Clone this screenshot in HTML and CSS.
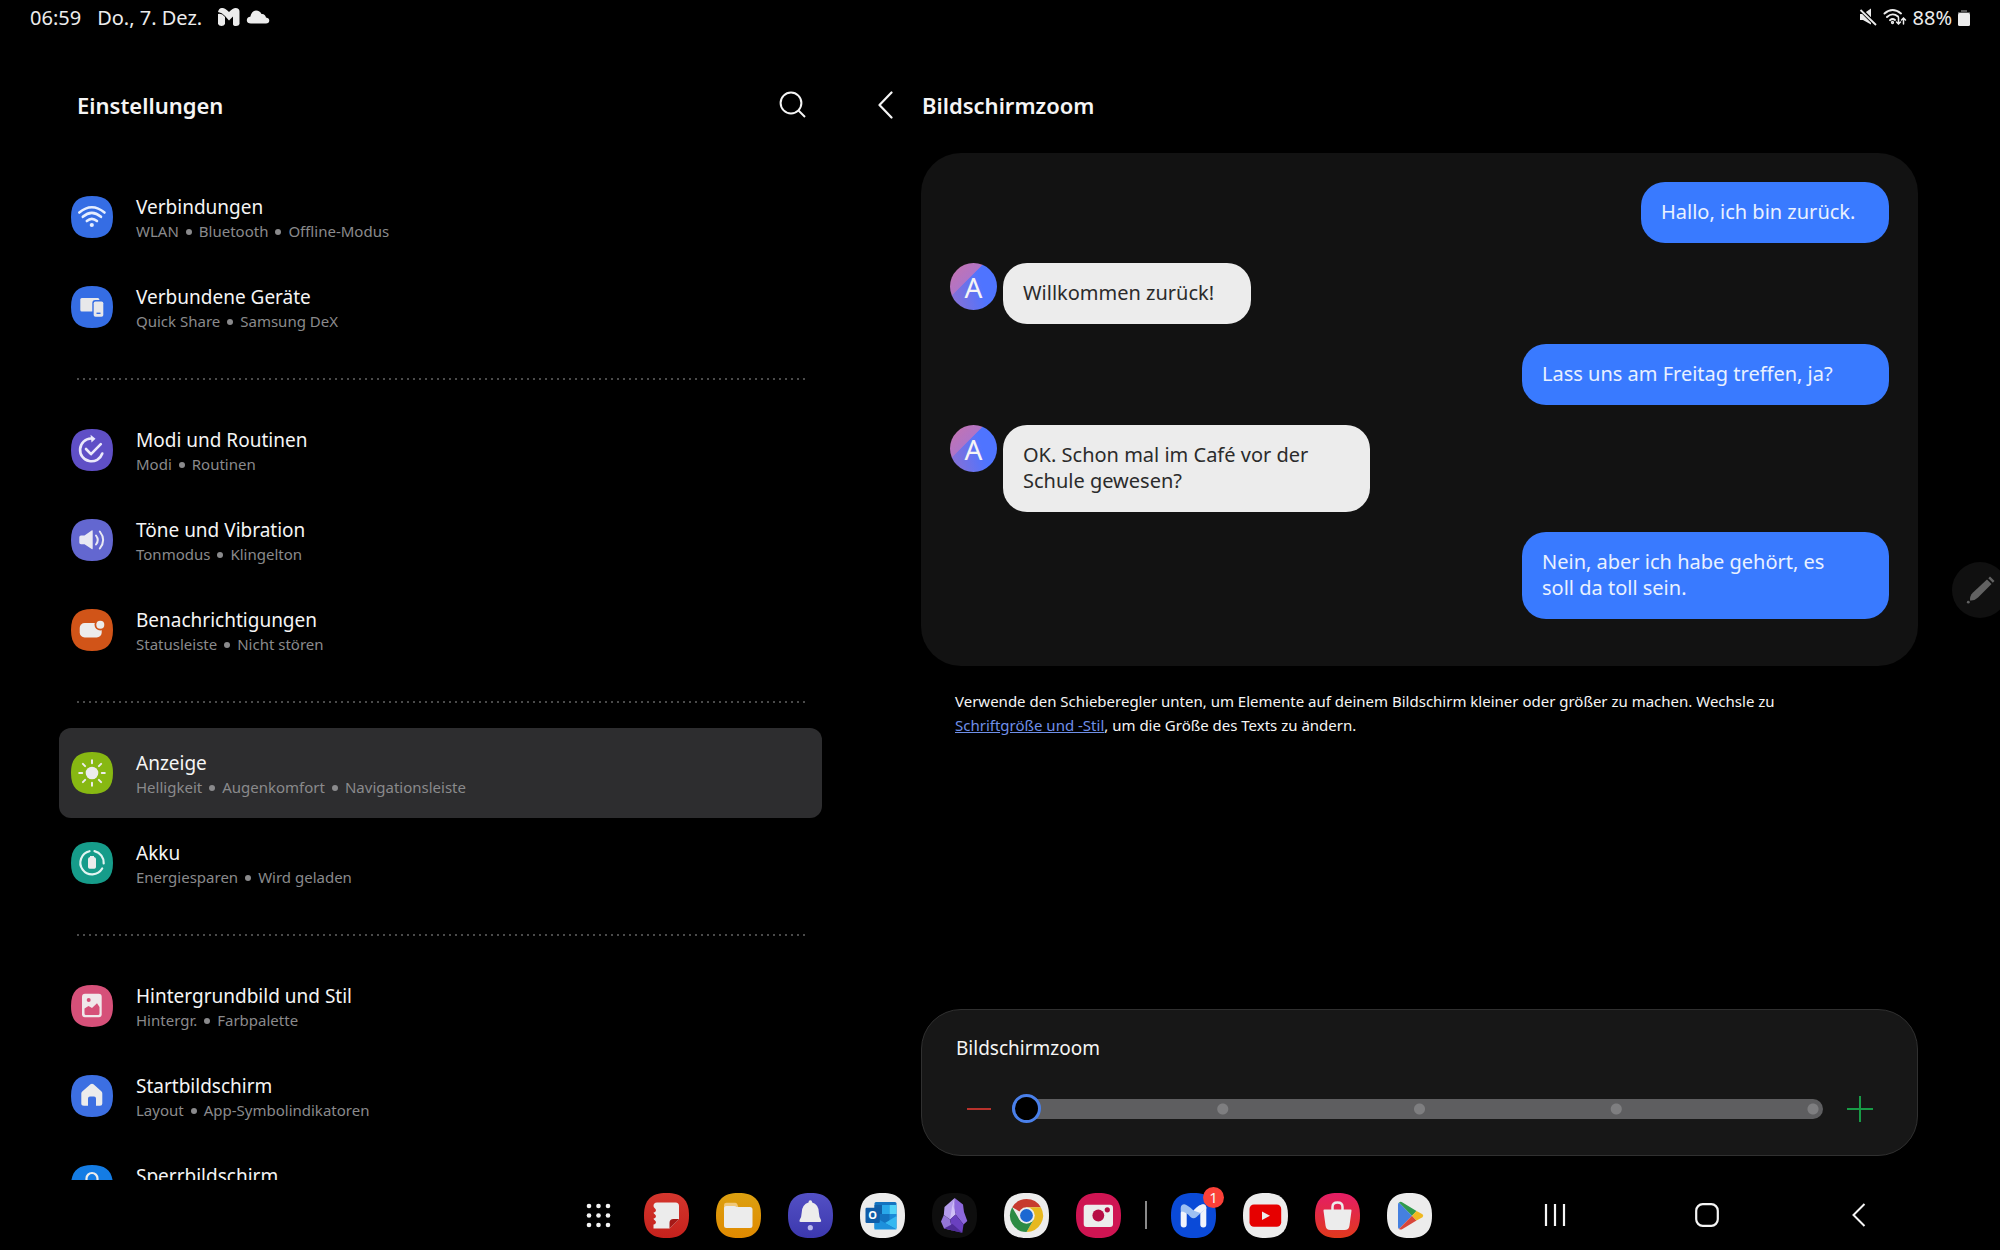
FILE: index.html
```html
<!DOCTYPE html>
<html lang="de">
  <head>
    <meta charset="UTF-8" />
    <meta name="viewport" content="width=device-width, initial-scale=1" />
    <title>Einstellungen – Bildschirmzoom</title>
    <link rel="stylesheet" href="styles.css">
  </head>
  <body>
    <!-- shared icon background -->
    <svg class="defs" aria-hidden="true">
      <symbol id="squircle" viewBox="0 0 42 42">
        <path d="M21 0C35.500 0 42 6.500 42 21S35.500 42 21 42 0 35.500 0 21 6.500 0 21 0Z" />
      </symbol>
      <linearGradient id="notes-bg" x2="0" y2="1">
        <stop stop-color="#d4362d" />
        <stop offset="1" stop-color="#c5211c" />
      </linearGradient>
      <linearGradient id="files-bg" x2="0" y2="1">
        <stop stop-color="#dca010" />
        <stop offset="1" stop-color="#e08a00" />
      </linearGradient>
      <linearGradient id="bell-bg" x2="0" y2="1">
        <stop stop-color="#5350c4" />
        <stop offset="1" stop-color="#3c38ae" />
      </linearGradient>
      <linearGradient id="store-bg" x2="0" y2="1">
        <stop stop-color="#e51d66" />
        <stop offset="1" stop-color="#e0391c" />
      </linearGradient>
    </svg>

    <header class="status-bar">
      <span>06:59</span>
      <span class="date">Do., 7. Dez.</span>
      <svg class="status-m" width="22" height="20" viewBox="0 0 22 20">
        <path d="M0 7Q4 6 7 10V17Q6 19 3.500 19T0 17Z" fill="#ececec" />
        <path d="M0 5Q1 .5 4.500 1 7 1 11 5 15 1 17.500 1 21.500 1 21.500 4.500V17Q21 19 18 19T15 17V9.500L11 13.500 7 9Q4 5.500 0 5Z" fill="#ececec" />
      </svg>
      <svg width="24" height="16" viewBox="0 0 24 16">
        <path d="M5 14.500Q1 14.500 .8 11.300 1 8 4.300 7.800 5.500 2 10 1.500 14 1.500 15.500 5 19 4.500 20 8.500 23.300 9 23.300 11.800 23 14.500 20 14.500Z" fill="#ececec" />
      </svg>
      <div class="status-right">
        <svg width="18" height="18" viewBox="0 0 18 18">
          <path d="M1 6h3l8-5.500v16L4 12H1Z" fill="#ececec" />
          <path d="M1 1 17 17" stroke="#000" stroke-width="4" />
          <path d="M1.500 2 17 17" stroke="#ececec" stroke-width="1.800" />
        </svg>
        <svg width="24" height="18" viewBox="0 0 24 18" fill="none" stroke="#ececec" stroke-width="1.900" stroke-linecap="round">
          <path d="M1.500 5.500Q9.500-1.500 18 5.500M4 9Q9.500 4 15 8.500M7 12.200Q9.500 10 12 12" />
          <circle cx="9.500" cy="14.500" r=".7" />
          <path d="M15.500 9.500v6M13.500 14l2 2 2-2M20.500 16v-5M18.500 12l2-2 2 2" stroke-width="1.500" />
        </svg>
        <span>88%</span>
        <svg width="12" height="17" viewBox="0 0 12 17">
          <path d="M3 1h6v2H12V5H0V3H3Z" fill="#555" />
          <rect y="4" width="12" height="13" rx="1.500" fill="#ececec" />
        </svg>
      </div>
    </header>

    <main class="panes">
      <section class="settings">
        <div class="pane-header">
          <h1>Einstellungen</h1>
          <button class="icon-button" type="button" aria-label="Suchen">
            <svg width="28" height="28" viewBox="0 0 28 28" fill="none" stroke="#f5f5f5" stroke-width="2">
              <circle cx="12" cy="12" r="10.400" />
              <path d="M19.500 19.500 26 26" />
            </svg>
          </button>
        </div>

        <nav class="settings-list">
          <div class="group">
            <a class="row" href="#verbindungen">
              <svg class="row-icon" viewBox="0 0 42 42">
                <use href="#squircle" fill="#356de4" />
                <g fill="none" stroke="#e6eeff" stroke-width="2.600" stroke-linecap="round">
                  <path d="M8.300 16.500Q20.800 6 33.500 16.500M11.800 20.800Q20.800 13 30 20.800M15.800 25Q20.800 20.600 26 25" />
                </g>
                <circle cx="20.800" cy="29" r="2.100" fill="#e6eeff" />
              </svg>
              <span class="row-text">
                <span class="row-title">Verbindungen</span>
                <span class="row-sub"><span>WLAN</span><span>Bluetooth</span><span>Offline-Modus</span></span>
              </span>
            </a>
            <a class="row" href="#geraete">
              <svg class="row-icon" viewBox="0 0 42 42">
                <use href="#squircle" fill="#356de4" />
                <rect x="9.300" y="12" width="19" height="13.500" rx="1.500" fill="#e8e8ea" />
                <rect x="21.300" y="14" width="12" height="18.500" rx="3" fill="#356de4" />
                <rect x="22.700" y="15.400" width="9.600" height="15.400" rx="1.800" fill="#e8e8ea" />
                <path d="M25.500 27.300h4" stroke="#356de4" stroke-width="1.400" />
              </svg>
              <span class="row-text">
                <span class="row-title">Verbundene Geräte</span>
                <span class="row-sub"><span>Quick Share</span><span>Samsung DeX</span></span>
              </span>
            </a>
          </div>

          <div class="group">
            <a class="row" href="#modi">
              <svg class="row-icon" viewBox="0 0 42 42">
                <use href="#squircle" fill="#5f4fc6" />
                <g fill="none" stroke="#ebe9fb" stroke-width="2.600" stroke-linecap="round" stroke-linejoin="round">
                  <path d="M20 9.500A11.400 11.400 0 1 0 31.300 24.500" />
                  <path d="M15 20 20 25.200 29.800 15.200" />
                </g>
                <path d="M19.500 5.800 24.500 9.800 20.500 13.600Z" fill="#ebe9fb" />
              </svg>
              <span class="row-text">
                <span class="row-title">Modi und Routinen</span>
                <span class="row-sub"><span>Modi</span><span>Routinen</span></span>
              </span>
            </a>
            <a class="row" href="#toene">
              <svg class="row-icon" viewBox="0 0 42 42">
                <use href="#squircle" fill="#6367d0" />
                <path d="M10 16.500H13.500L21 11.300Q21.700 11 21.700 12V29.500Q21.700 30.800 20.700 30L13.500 25.300H10Q8.300 25.300 8.300 23.600V18.200Q8.300 16.500 10 16.500Z" fill="#e9e9f3" />
                <g fill="none" stroke="#e9e9f3" stroke-width="2" stroke-linecap="round">
                  <path d="M25 16.500Q28.500 21 25 25.500M28.800 12.500Q35.500 21 28.800 29.500" />
                </g>
              </svg>
              <span class="row-text">
                <span class="row-title">Töne und Vibration</span>
                <span class="row-sub"><span>Tonmodus</span><span>Klingelton</span></span>
              </span>
            </a>
            <a class="row" href="#benachrichtigungen">
              <svg class="row-icon" viewBox="0 0 42 42">
                <use href="#squircle" fill="#d15418" />
                <rect x="8.700" y="14" width="22" height="14.500" rx="5" fill="#ececec" />
                <circle cx="29.300" cy="15.700" r="5.800" fill="#d15418" />
                <circle cx="29.300" cy="15.700" r="4" fill="#ececec" />
              </svg>
              <span class="row-text">
                <span class="row-title">Benachrichtigungen</span>
                <span class="row-sub"><span>Statusleiste</span><span>Nicht stören</span></span>
              </span>
            </a>
          </div>

          <div class="group">
            <a class="row active" href="#anzeige" aria-current="page">
              <svg class="row-icon" viewBox="0 0 42 42">
                <use href="#squircle" fill="#87b812" />
                <circle cx="21" cy="21" r="6.300" fill="#ececec" />
                <path d="M21 8.200v3M21 30.800v3M8.200 21h3M30.800 21h3M11.900 11.900l2.200 2.200M27.900 27.900l2.200 2.200M11.900 30.100l2.200-2.200M27.900 14.100l2.200-2.200" stroke="#ececec" stroke-width="2" stroke-linecap="round" />
              </svg>
              <span class="row-text">
                <span class="row-title">Anzeige</span>
                <span class="row-sub"><span>Helligkeit</span><span>Augenkomfort</span><span>Navigationsleiste</span></span>
              </span>
            </a>
            <a class="row" href="#akku">
              <svg class="row-icon" viewBox="0 0 42 42">
                <use href="#squircle" fill="#169c8a" />
                <g fill="none" stroke="#e2f5f2" stroke-width="2.200" stroke-linecap="round">
                  <path d="M18.500 9.200A11.700 11.700 0 1 0 31.200 26.500" />
                  <path d="M23.500 9.200A11.700 11.700 0 0 1 32.700 21.500" />
                </g>
                <path d="M19 15V14h4v1q2 .3 2 2v8q0 1.700-1.700 1.700h-4.600Q17 26.700 17 25V17q0-1.700 2-2Z" fill="#ececec" />
              </svg>
              <span class="row-text">
                <span class="row-title">Akku</span>
                <span class="row-sub"><span>Energiesparen</span><span>Wird geladen</span></span>
              </span>
            </a>
          </div>

          <div class="group">
            <a class="row" href="#hintergrund">
              <svg class="row-icon" viewBox="0 0 42 42">
                <use href="#squircle" fill="#d65079" />
                <rect x="11" y="8.700" width="19.700" height="23.600" rx="3" fill="#f0e8eb" />
                <circle cx="17.700" cy="15" r="2" fill="#d65079" />
                <path d="M13.500 23.500 17.500 21 21 23 26 18.300 28.500 22V28.500Q28.500 30 27 30H15Q13.500 30 13.500 28.500Z" fill="#d65079" />
              </svg>
              <span class="row-text">
                <span class="row-title">Hintergrundbild und Stil</span>
                <span class="row-sub"><span>Hintergr.</span><span>Farbpalette</span></span>
              </span>
            </a>
            <a class="row" href="#startbildschirm">
              <svg class="row-icon" viewBox="0 0 42 42">
                <use href="#squircle" fill="#3c6fe2" />
                <path d="M19.500 9.300Q21 8.300 22.500 9.300L30.300 16.300Q31.300 17.200 31.300 18.500V28.500Q31.300 30.700 29 30.700H25V23.500Q25 21.500 23 21.500H19Q17 21.500 17 23.500V30.700H13Q10.300 30.700 10.300 28.500V18.500Q10.300 17.200 11.500 16.300Z" fill="#ececec" />
              </svg>
              <span class="row-text">
                <span class="row-title">Startbildschirm</span>
                <span class="row-sub"><span>Layout</span><span>App-Symbolindikatoren</span></span>
              </span>
            </a>
            <a class="row" href="#sperrbildschirm">
              <svg class="row-icon" viewBox="0 0 42 42">
                <use href="#squircle" fill="#147ce4" />
                <path d="M15.500 18V13.500a5.500 5.500 0 0 1 11 0V18" fill="none" stroke="#ececec" stroke-width="2.200" />
                <rect x="12" y="17" width="18" height="14" rx="3" fill="#ececec" />
              </svg>
              <span class="row-text">
                <span class="row-title">Sperrbildschirm</span>
              </span>
            </a>
          </div>
        </nav>
      </section>

      <section class="detail">
        <div class="pane-header">
          <button class="icon-button back" type="button" aria-label="Zurück">
            <svg width="20" height="28" viewBox="0 0 20 28" fill="none" stroke="#f5f5f5" stroke-width="2.200" stroke-linecap="round" stroke-linejoin="round">
              <path d="M16.500 1.500 4.500 14 16.500 26.500" />
            </svg>
          </button>
          <h2>Bildschirmzoom</h2>
        </div>

        <div class="detail-body">
          <div class="chat">
            <div class="message sent"><p class="bubble">Hallo, ich bin zurück.</p></div>
            <div class="message">
              <span class="avatar">A</span>
              <p class="bubble">Willkommen zurück!</p>
            </div>
            <div class="message sent"><p class="bubble wide">Lass uns am Freitag treffen, ja?</p></div>
            <div class="message">
              <span class="avatar">A</span>
              <p class="bubble wide">OK. Schon mal im Café vor der Schule gewesen?</p>
            </div>
            <div class="message sent"><p class="bubble wide">Nein, aber ich habe gehört, es soll da toll sein.</p></div>
          </div>

          <p class="hint">
            Verwende den Schieberegler unten, um Elemente auf deinem Bildschirm kleiner oder größer zu machen. Wechsle zu
            <a href="#schrift">Schriftgröße und -Stil</a>, um die Größe des Texts zu ändern.
          </p>

          <div class="zoom-card">
            <label for="zoom">Bildschirmzoom</label>
            <div class="zoom-control">
              <button class="icon-button" type="button" aria-label="Kleiner">
                <svg width="26" height="26" viewBox="0 0 26 26" stroke="#b8322c" stroke-width="2">
                  <path d="M1 13h24" />
                </svg>
              </button>
              <input type="range" id="zoom" min="0" max="4" step="1" value="0" />
              <button class="icon-button" type="button" aria-label="Größer">
                <svg width="26" height="26" viewBox="0 0 26 26" stroke="#189a46" stroke-width="2">
                  <path d="M0 13h26M13 0v26" />
                </svg>
              </button>
            </div>
          </div>
        </div>
      </section>
    </main>

    <footer class="taskbar">
      <div class="dock">
        <button class="icon-button all-apps" type="button" aria-label="Alle Apps">
          <svg width="25" height="25" viewBox="0 0 25 25" fill="#f5f5f5">
            <circle cx="3" cy="3" r="2.300" /><circle cx="12.500" cy="3" r="2.300" /><circle cx="22" cy="3" r="2.300" />
            <circle cx="3" cy="12.500" r="2.300" /><circle cx="12.500" cy="12.500" r="2.300" /><circle cx="22" cy="12.500" r="2.300" />
            <circle cx="3" cy="22" r="2.300" /><circle cx="12.500" cy="22" r="2.300" /><circle cx="22" cy="22" r="2.300" />
          </svg>
        </button>
        <button class="app" type="button" aria-label="Notes">
          <svg viewBox="0 0 45 45">
            <use href="#squircle" fill="url(#notes-bg)" />
            <path d="M13 9.500H31.500Q35 9.500 35 13V26L25.500 35.500H9.500V31.500A2.200 2.200 0 0 0 11 27.500Q9.500 26.500 9.500 25.500A2.200 2.200 0 0 0 11 21.500Q9.500 20.500 9.500 19.500A2.200 2.200 0 0 0 11 15.500Q9.500 14 9.500 13 9.500 9.500 13 9.500Z" fill="#ececec" />
            <path d="M25.500 35.500V30Q25.500 26 29.500 26H35Z" fill="#a51816" />
          </svg>
        </button>
        <button class="app" type="button" aria-label="Eigene Dateien">
          <svg viewBox="0 0 45 45">
            <use href="#squircle" fill="url(#files-bg)" />
            <path d="M8 16V12Q8 9.800 10.500 9.800H19Q20.500 9.800 21.200 11L22.500 14.500Z" fill="#f0c87a" />
            <path d="M8 15.500Q8 13 10.500 13H18Q19.500 13 20.500 14H34Q36.500 14 36.500 16.500V32.500Q36.500 35 34 35H10.500Q8 35 8 32.500Z" fill="#ececec" />
          </svg>
        </button>
        <button class="app" type="button" aria-label="Erinnerungen">
          <svg viewBox="0 0 45 45">
            <use href="#squircle" fill="url(#bell-bg)" />
            <path d="M20.500 9.500Q20.500 7.300 22.300 7.300T24.200 9.500Q30.500 11.500 30.800 19 31 24 33 27 33.800 29 32 29H12.600Q10.800 29 11.600 27 13.600 24 13.800 19 14.200 11.500 20.500 9.500Z" fill="#ececec" />
            <circle cx="22.300" cy="34.700" r="2.600" fill="#b9b8ee" />
          </svg>
        </button>
        <button class="app" type="button" aria-label="Outlook">
          <svg viewBox="0 0 45 45">
            <use href="#squircle" fill="#ececec" />
            <rect x="14.500" y="9" width="22" height="27" rx="1.500" fill="#1373c0" />
            <path d="M14.500 12h7.500v9h-7.500Z" fill="#1160a8" />
            <path d="M22 12h7.500v9H22Z" fill="#28a8ea" />
            <path d="M29.500 12h7v9h-7Z" fill="#50d2f8" />
            <path d="M29.500 21h7v3l-7 4Z" fill="#1a8ad8" />
            <path d="M36.500 23 25 30 36.500 36.500Z" fill="#35b8f1" />
            <path d="M14.500 24 36.500 36.500H14.500Z" fill="#1d90dc" />
            <rect x="5.500" y="14.700" width="14.300" height="15.300" rx="1.200" fill="#0f5ca8" />
            <text class="outlook-letter" x="12.700" y="26.400">O</text>
          </svg>
        </button>
        <button class="app" type="button" aria-label="Obsidian">
          <svg viewBox="0 0 45 45">
            <use href="#squircle" fill="#0e0e0e" />
            <path d="M22.700 5 12.500 14 11.800 22 18 26.500 23.500 21.500Z" fill="#b49cec" />
            <path d="M22.700 5 31 11.500 32 19 35.300 28 31.500 31.500 23.500 21.500 22.500 14Z" fill="#8d68dc" />
            <path d="M22.700 5 21.500 13.500 23.500 21.500 18 26.500 20 14Z" fill="#d0c0f6" />
            <path d="M11.800 22 18 26.500 20.500 37.500 12 35.500 9 28.500Z" fill="#9476d8" />
            <path d="M18 26.500 23.500 21.500 31.500 31.500 30.300 39.700 20.500 37.500Z" fill="#6a40bf" />
            <path d="M12 35.500 20.500 31 30.300 39.700 20.500 37.500Z" fill="#4f2c98" />
          </svg>
        </button>
        <button class="app" type="button" aria-label="Chrome">
          <svg viewBox="0 0 45 45">
            <use href="#squircle" fill="#ececec" />
            <path d="M22.500 22.500 8.200 14.250A16.500 16.500 0 0 1 36.800 14.250H22.500Z" fill="#c73a2e" />
            <path d="M22.500 14.250H36.800A16.500 16.500 0 0 1 22.500 39L29.650 26.600Z" fill="#e7b820" />
            <path d="M8.200 14.250A16.500 16.500 0 0 0 22.500 39L29.650 26.600 22.500 22.500 15.350 26.600Z" fill="#2c8b44" />
            <circle cx="22.500" cy="22.500" r="8.250" fill="#ececec" />
            <circle cx="22.500" cy="22.500" r="6.400" fill="#1c68d2" />
          </svg>
        </button>
        <button class="app" type="button" aria-label="Kamera">
          <svg viewBox="0 0 45 45">
            <use href="#squircle" fill="#cf1452" />
            <rect x="7.700" y="11.700" width="29.300" height="22.300" rx="3" fill="#ececec" />
            <circle cx="22.300" cy="22.500" r="5.900" fill="#b70d45" />
            <circle cx="31.300" cy="16.800" r="2.600" fill="#b70d45" />
          </svg>
        </button>
        <span class="dock-divider"></span>
        <button class="app" type="button" aria-label="Mail, 1 neue Benachrichtigung">
          <svg viewBox="0 0 45 45">
            <use href="#squircle" fill="#0a4ad8" />
            <path d="M12.700 20v11.500M32.300 15v16.500" stroke="#f0f3fb" stroke-width="6" stroke-linecap="round" />
            <path d="M9.700 15Q10 11.300 13.300 11.300 16 11.500 22.500 17.500 28.500 11.300 32 11.300 35.300 11.500 35.300 15L25.500 24Q22.500 26.500 19.500 24 15 18.500 9.700 18.500Z" fill="#9dc0f2" />
            <path d="M22.500 17.500Q28.500 11.300 32 11.300 35.300 11.500 35.300 15.500L29.300 20Z" fill="#f0f3fb" />
          </svg>
          <span class="badge">1</span>
        </button>
        <button class="app" type="button" aria-label="YouTube">
          <svg viewBox="0 0 45 45">
            <use href="#squircle" fill="#ececec" />
            <rect x="6.500" y="11.500" width="31.700" height="22.300" rx="4.500" fill="#e60000" />
            <path d="M19 18.500V27L27 22.700Z" fill="#ececec" />
          </svg>
        </button>
        <button class="app" type="button" aria-label="Galaxy Store">
          <svg viewBox="0 0 45 45">
            <use href="#squircle" fill="url(#store-bg)" />
            <path d="M17.500 17V14Q17.500 9.500 22.500 9.500T27.500 14V17" fill="none" stroke="#ececec" stroke-width="2.500" />
            <path d="M9.500 16.500H35.500Q36.800 16.500 36.500 17.800L34.500 32.500Q34 37 29.500 37H15.500Q11 37 10.500 32.500L8.500 17.800Q8.200 16.500 9.500 16.500Z" fill="#ececec" />
          </svg>
        </button>
        <button class="app" type="button" aria-label="Play Store">
          <svg viewBox="0 0 45 45">
            <use href="#squircle" fill="#ececec" />
            <path d="M12 9.500 25 22.700 12 36Q11 35.500 11 34V11.500Q11 10 12 9.500Z" fill="#4580e0" />
            <path d="M12 9.500Q13.500 8.200 15.500 9.500L29.500 18 25 22.700Z" fill="#2f9a4c" />
            <path d="M12 36Q13.500 37.200 15.500 36L29.500 27.500 25 22.700Z" fill="#d8463a" />
            <path d="M29.500 18 35.500 21.300Q37 22.700 35.500 24.200L29.500 27.500 25 22.700Z" fill="#efb820" />
          </svg>
        </button>
      </div>
      <nav class="system-nav">
        <button class="icon-button" type="button" aria-label="Letzte Apps">
          <svg width="24" height="24" viewBox="0 0 24 24" stroke="#f5f5f5" stroke-width="2.200">
            <path d="M3 1v22M12 1v22M21 1v22" />
          </svg>
        </button>
        <button class="icon-button" type="button" aria-label="Startseite">
          <svg width="24" height="24" viewBox="0 0 24 24" fill="none" stroke="#f5f5f5" stroke-width="2.200">
            <rect x="1.200" y="1.200" width="21.600" height="21.600" rx="6.500" />
          </svg>
        </button>
        <button class="icon-button" type="button" aria-label="Zurück">
          <svg width="24" height="24" viewBox="0 0 24 24" fill="none" stroke="#f5f5f5" stroke-width="2">
            <path d="M17.500 1 6.500 12 17.500 23" />
          </svg>
        </button>
      </nav>
    </footer>

    <button class="pen-handle" type="button" aria-label="S Pen">
      <svg width="30" height="30" viewBox="0 0 30 30" fill="#626262">
        <path d="M4 25.500Q3.500 21 7 17.500L21 4.500 25.500 9 12 22.500Q8.500 26 4 25.500Z" />
        <path d="M22.300 3.200 24 1.500 28.500 6 26.800 7.700Z" />
        <circle cx="2.300" cy="27.200" r="1.400" />
      </svg>
    </button>
  </body>
</html>
```

FILE: styles.css
```css
* {
  box-sizing: border-box;
}

body {
  display: flex;
  flex-direction: column;
  height: 100vh;
  margin: 0;
  overflow: hidden;
  position: relative;
  background: #000;
  color: #f5f5f5;
  font-family: "Noto Sans", Roboto, sans-serif;
  font-size: 19px;
}

h1,
h2,
p {
  margin: 0;
}

svg {
  display: block;
}

button {
  padding: 0;
  border: none;
  background: none;
  color: inherit;
  font: inherit;
  cursor: pointer;
}

.defs {
  position: absolute;
  width: 0;
  height: 0;
}

/* status bar */
.status-bar {
  display: flex;
  align-items: center;
  flex: none;
  height: 36px;
  padding: 0 30px 2px;
  color: #ececec;
  font-size: 20px;
}

.date {
  margin: 0 16px;
}

.status-m {
  margin-right: 6px;
}

.status-right {
  display: flex;
  align-items: center;
  gap: 6px;
  margin-left: auto;
}

/* two pane layout */
.panes {
  display: grid;
  grid-template-columns: 43% 1fr;
  flex: 1;
  min-height: 0;
}

.settings {
  display: flex;
  flex-direction: column;
  min-height: 0;
  padding: 35px 38px 0 59px;
}

.detail {
  display: flex;
  flex-direction: column;
  padding: 35px 82px 24px 15px;
}

.pane-header {
  display: flex;
  align-items: center;
  flex: none;
  height: 70px;
  padding-bottom: 2px;
}

.pane-header h1,
.pane-header h2 {
  font-size: 22px;
  font-weight: 600;
}

.settings .pane-header {
  justify-content: space-between;
  margin-bottom: 31px;
  padding-right: 15px;
  padding-left: 18px;
}

.detail .pane-header {
  gap: 27px;
  margin-bottom: 12px;
}

.icon-button {
  display: flex;
  align-items: center;
  justify-content: center;
}

/* settings list */
.settings-list {
  flex: 1;
  min-height: 0;
  overflow: hidden;
}

.group + .group::before {
  content: "";
  display: block;
  height: 2px;
  margin: 26px 16px 25px 18px;
  background: repeating-linear-gradient(90deg, #4a4a4a 0 2px, transparent 2px 6px);
}

.row {
  display: flex;
  align-items: center;
  gap: 23px;
  height: 90px;
  padding: 0 12px;
  border-radius: 12px;
  color: inherit;
  text-decoration: none;
}

.row.active {
  background: #2d2d2f;
}

.row-icon {
  flex: none;
  width: 42px;
  height: 42px;
}

.row-text {
  display: flex;
  flex-direction: column;
  min-height: 50px;
  padding-top: 3px;
}

.row-title {
  line-height: 25px;
}

.row-sub {
  display: flex;
  align-items: center;
  color: #8a8a8c;
  font-size: 15px;
  line-height: 22px;
}

.row-sub span + span::before {
  content: "";
  display: inline-block;
  width: 6px;
  height: 6px;
  margin: 0 7px 2px;
  border-radius: 50%;
  background: currentColor;
}

/* chat preview */
.detail-body {
  display: flex;
  flex-direction: column;
  flex: 1;
  margin-left: 46px;
}

.chat {
  display: flex;
  flex-direction: column;
  gap: 20px;
  padding: 29px 29px 47px;
  border-radius: 40px;
  background: #121212;
}

.message {
  display: flex;
  align-items: flex-start;
  gap: 6px;
}

.message.sent {
  justify-content: flex-end;
}

.avatar {
  display: flex;
  align-items: center;
  justify-content: center;
  width: 47px;
  height: 47px;
  border-radius: 50%;
  background:
    linear-gradient(135deg, #c873ac, #b074c6 36%, transparent 37%),
    linear-gradient(75deg, #8f70d0, #4f74ff 65%);
  font-size: 28px;
}

.bubble {
  min-width: 248px;
  padding: 17px 20px 18px;
  border-radius: 24px;
  background: #ececec;
  color: #2b2b2b;
  font-size: 20px;
  line-height: 26px;
}

.bubble.wide {
  width: 367px;
  padding-right: 40px;
}

.sent .bubble {
  background: #397aff;
  color: #e9f1ff;
}

.hint {
  padding: 23px 34px;
  font-size: 15px;
  line-height: 24px;
}

.hint a {
  color: #6f8fe8;
  white-space: nowrap;
}

/* zoom slider */
.zoom-card {
  margin-top: auto;
  padding: 24px 34px 32px;
  border: 1px solid #303030;
  border-radius: 40px;
  background: #171717;
}

.zoom-card label {
  display: block;
  margin-bottom: 32px;
  line-height: 28px;
}

.zoom-control {
  display: flex;
  align-items: center;
  gap: 20px;
  height: 29px;
  padding: 0 10px;
}

#zoom {
  flex: 1;
  height: 20px;
  margin: 0 4px 0 0;
  appearance: none;
  border-radius: 10px;
  background:
    radial-gradient(circle at calc(25% + 8px) 50%, #7e7e80 5px, transparent 6px),
    radial-gradient(circle at calc(50% + 2px) 50%, #7e7e80 5px, transparent 6px),
    radial-gradient(circle at calc(75% - 4px) 50%, #7e7e80 5px, transparent 6px),
    radial-gradient(circle at calc(100% - 10px) 50%, #7e7e80 5px, transparent 6px),
    #5e5e60;
}

#zoom::-webkit-slider-thumb {
  width: 29px;
  height: 29px;
  appearance: none;
  border: 3px solid #4a80ea;
  border-radius: 50%;
  background: #000;
}

/* taskbar */
.taskbar {
  display: flex;
  align-items: center;
  justify-content: flex-end;
  gap: 100px;
  flex: none;
  height: 70px;
  padding-right: 119px;
}

.dock {
  display: flex;
  align-items: center;
  gap: 27px;
}

.all-apps {
  width: 37px;
  height: 45px;
}

.app {
  position: relative;
  width: 45px;
  height: 45px;
}

.outlook-letter {
  fill: #fff;
  font-size: 11px;
  font-weight: 700;
  text-anchor: middle;
}

.badge {
  position: absolute;
  top: -6px;
  right: -8px;
  width: 21px;
  height: 21px;
  border-radius: 50%;
  background: #fb4038;
  font-size: 15px;
  line-height: 21px;
}

.dock-divider {
  width: 2px;
  height: 28px;
  margin: 0 -3px;
  background: #8a8a8a;
}

.system-nav {
  display: flex;
  gap: 107px;
}

.system-nav .icon-button {
  width: 45px;
  height: 45px;
}

/* pen handle sticks out of the right screen edge */
.pen-handle {
  position: absolute;
  top: 562px;
  right: -8px;
  display: flex;
  align-items: center;
  width: 56px;
  height: 56px;
  padding-left: 14px;
  border-radius: 50%;
  background: #101010;
}
```
